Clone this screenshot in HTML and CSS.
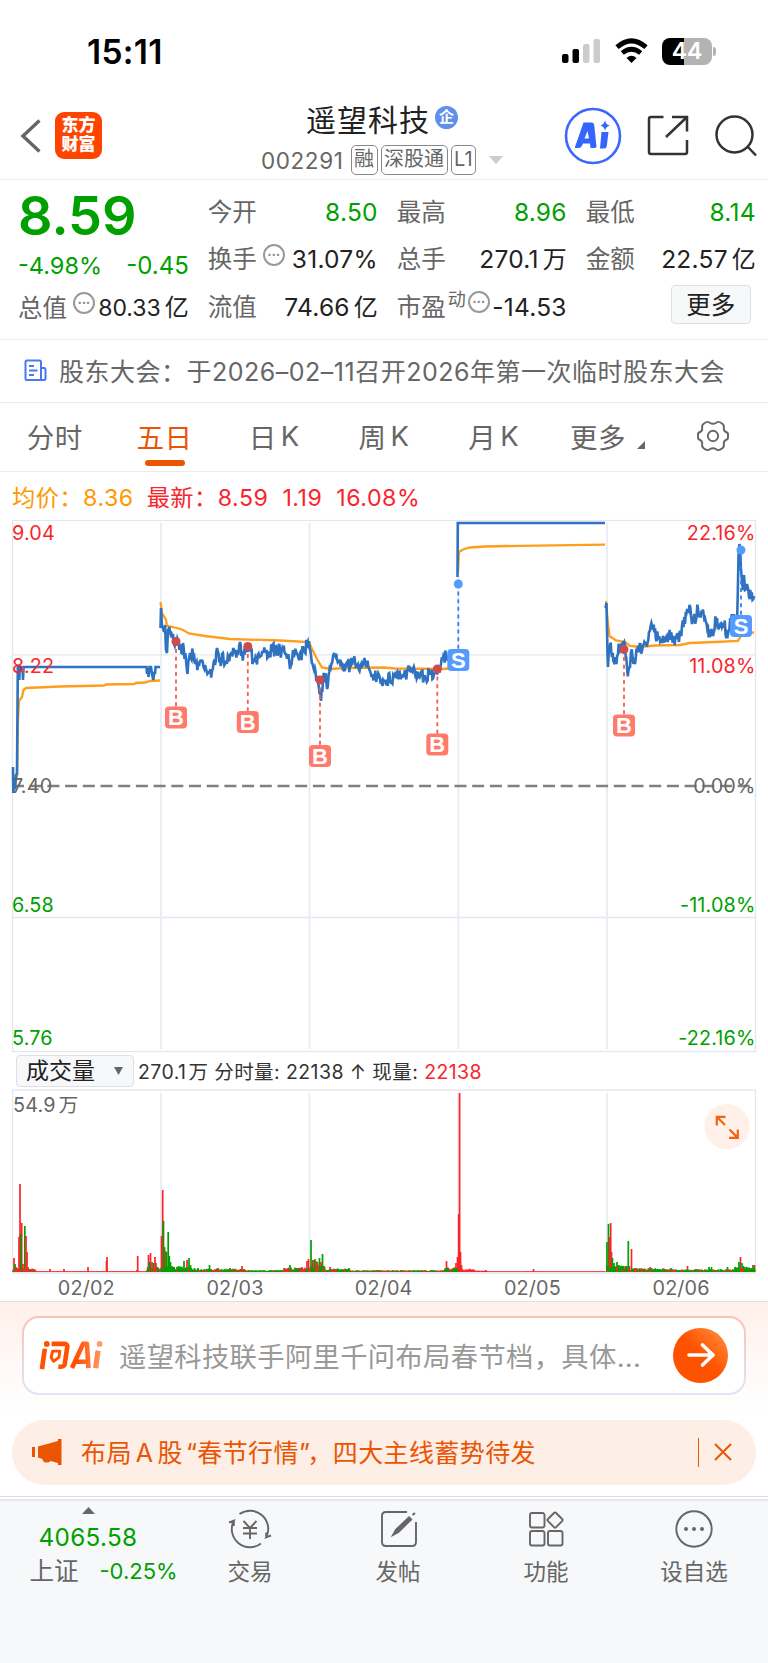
FILE: index.html
```
<!DOCTYPE html>
<html lang="zh-CN">
<head>
    <meta charset="utf-8">
    <title>遥望科技 002291</title>
    <link rel="stylesheet" href="styles.css">
</head>
<body>
    <div class="status-bar">
        <span class="time">15:11</span>
        <div class="status-icons">
            <svg width="39" height="25" viewBox="0 0 39 25">
                <rect x="0" y="15" width="6.5" height="9" rx="2" fill="#000"/>
                <rect x="10.5" y="10" width="6.5" height="14" rx="2" fill="#000"/>
                <rect x="21" y="5" width="6.5" height="19" rx="2" fill="#ccc"/>
                <rect x="31.5" y="0" width="6.5" height="24" rx="2" fill="#ccc"/>
            </svg>
            <svg width="33" height="25" viewBox="0 0 33 25">
                <path d="M2 8.2 Q16.5 -4.6 31 8.2" fill="none" stroke="#000" stroke-width="5"/>
                <path d="M7.3 14 Q16.5 6.4 25.7 14" fill="none" stroke="#000" stroke-width="4.8"/>
                <path d="M11.5 19 Q16.5 14.6 21.5 19 L16.5 24 Z" fill="#000"/>
            </svg>
            <div class="battery"><span>44</span></div>
        </div>
    </div>

    <div class="header">
        <div class="header-left">
            <svg width="20" height="34" viewBox="0 0 20 34"><path d="M18.5 1.5 L2 17 L18.5 32.5" fill="none" stroke="#666" stroke-width="3.4"/></svg>
            <div class="logo">东方<br>财富</div>
        </div>
        <div class="header-title">
            <div class="name">遥望科技<span class="corp">企</span></div>
            <div class="code">
                <span>002291</span><i class="tag">融</i><i class="tag">深股通</i><i class="tag">L1</i>
                <svg class="drop" width="14" height="8" viewBox="0 0 14 8"><path d="M0 0H14L7 8Z" fill="#ccc"/></svg>
            </div>
        </div>
        <div class="header-right">
            <svg width="58" height="58" viewBox="0 0 58 58">
                <circle cx="29" cy="29" r="27" fill="none" stroke="#3b66ff" stroke-width="2.6"/>
                <path fill="#3466ff" fill-rule="evenodd" d="M19.5 15.5H28Q30 15.5 30.2 18L32.5 39.5Q32.3 41 30.5 41H26.5L26 36.5H19L17.5 39.5Q16.5 41 14 41H11Q10.5 40.5 11.5 38.5ZM23.5 24L20.5 31.5H25Z"/>
                <path fill="#3466ff" d="M37.5 25H44.5L42.8 39Q42.5 41.5 40 41.5H36Z M41 13.5Q42 18 46 18.5Q42 19.5 41 23.5Q40 19.5 36.5 18.5Q40 17.5 41 13.5Z"/>
            </svg>
            <svg class="share" width="42" height="42" viewBox="0 0 42 42" fill="none" stroke="#333" stroke-width="2.5">
                <path d="M16.5 2H4Q2 2 2 4V37Q2 39 4 39H38Q40 39 40 37V25"/>
                <path d="M25 2H40V16.5M40 2L19 22"/>
            </svg>
            <svg width="42" height="42" viewBox="0 0 42 42" fill="none" stroke="#333" stroke-width="2.5">
                <circle cx="19.5" cy="19.5" r="18"/><path d="M32 31L41 40.5"/>
            </svg>
        </div>
    </div>

    <div class="quote">
        <div class="price-col">
            <div class="price">8.59</div>
            <div class="change"><span>-4.98%</span><span>-0.45</span></div>
            <div class="cell total"><label>总值</label><i class="dots">•••</i><b>80.33<em>亿</em></b></div>
        </div>
        <div class="cells">
            <div class="cell"><label>今开</label><b class="green">8.50</b></div>
            <div class="cell"><label>最高</label><b class="green">8.96</b></div>
            <div class="cell"><label>最低</label><b class="green">8.14</b></div>
            <div class="cell"><label>换手</label><i class="dots gap">•••</i><b>31.07%</b></div>
            <div class="cell"><label>总手</label><b>270.1<em>万</em></b></div>
            <div class="cell"><label>金额</label><b>22.57<em>亿</em></b></div>
            <div class="cell"><label>流值</label><b>74.66<em>亿</em></b></div>
            <div class="cell"><label>市盈</label><sup>动</sup><i class="dots pe">•••</i><b>-14.53</b></div>
            <div class="cell"><button class="more">更多</button></div>
        </div>
    </div>

    <div class="notice">
        <svg width="23" height="23" viewBox="0 0 23 23" fill="none" stroke="#4a78f5" stroke-width="2">
            <path d="M17 21H3Q1.5 21 1.5 19.5V3Q1.5 1.5 3 1.5H15.5Q17 1.5 17 3ZM17 9H20Q21.5 9 21.5 10.5V19.5Q21.5 21 20 21H17"/>
            <path d="M5 7H10M5 11.5H13.5M5 16H10"/>
        </svg>
        <span>股东大会：<u>于2026–02–11召开2026年第一次临时股东大会</u></span>
    </div>

    <div class="tabs">
        <div class="tab">分时</div>
        <div class="tab active">五日</div>
        <div class="tab">日<s>K</s></div>
        <div class="tab">周<s>K</s></div>
        <div class="tab">月<s>K</s></div>
        <div class="tab tab-more">更多<svg width="8" height="8" viewBox="0 0 8 8"><path d="M8 0V8H0Z" fill="#666"/></svg></div>
        <div class="tab">
            <svg width="34" height="32" viewBox="-17 -16 34 32" fill="none" stroke="#666" stroke-width="1.9">
                <circle r="5.2"/>
                <path d="M-9 -12.5Q-5 -15.5 -3 -13Q0 -11.5 3 -13Q5 -15.5 9 -12.5Q11.5 -11 10.8 -8Q10.5 -5 13 -4Q15.5 -3.5 15 0Q15.5 3.5 13 4Q10.5 5 10.8 8Q11.5 11 9 12.5Q5 15.5 3 13Q0 11.5 -3 13Q-5 15.5 -9 12.5Q-11.5 11 -10.8 8Q-10.5 5 -13 4Q-15.5 3.5 -15 0Q-15.5 -3.5 -13 -4Q-10.5 -5 -10.8 -8Q-11.5 -11 -9 -12.5Z"/>
            </svg>
        </div>
    </div>

    <div class="averages">
        <span class="avg">均价：<b>8.36</b></span>
        <span class="last">最新：<b>8.59</b><b>1.19</b><b>16.08%</b></span>
    </div>

    <svg class="chart" id="priceChart" width="768" height="534" viewBox="0 519 768 534"></svg>

    <div class="volume-bar">
        <button class="volume-type">成交量<svg width="9" height="8" viewBox="0 0 9 8"><path d="M0 0H9L4.5 8Z" fill="#666"/></svg></button>
        <span>270.1<em>万</em> 分时量: 22138 ↑ 现量: <strong>22138</strong></span>
    </div>

    <svg class="chart" id="volumeChart" width="768" height="213" viewBox="0 1088 768 213"></svg>

    <div class="ask">
        <div class="ask-box">
            <svg width="64" height="31" viewBox="0 0 66 32">
                <defs>
                    <linearGradient id="askFill" x1="0" y1="0" x2="66" y2="0" gradientUnits="userSpaceOnUse">
                        <stop offset="0.6" stop-color="#ff5200"/><stop offset="1" stop-color="#ff9c6c"/>
                    </linearGradient>
                </defs>
                <g fill="none" stroke="url(#askFill)" stroke-width="4.8" stroke-linejoin="round">
                    <path d="M6 9L3 30M13 4H26Q30 4 29 8L26.5 25Q26 28 20 27.5"/>
                    <path d="M14 11.5H21.5L20.5 18L15 22L12.5 18Z" stroke-width="3"/>
                    <path d="M34 29L45.5 4H49.5L51 29M38.5 22.5H51"/>
                    <path d="M61 11L58.5 29" stroke-width="5.4"/>
                </g>
                <circle cx="8" cy="4" r="3" fill="#ff5200"/>
                <circle cx="62.5" cy="4" r="3" fill="#ff9c6c"/>
            </svg>
            <span class="ask-text">遥望科技联手阿里千问布局春节档，具体...</span>
            <div class="ask-go">
                <svg width="28" height="26" viewBox="0 0 28 26" fill="none" stroke="#fff" stroke-width="3.6" stroke-linecap="round" stroke-linejoin="round"><path d="M2 13H26M15.5 3L26 13L15.5 23"/></svg>
            </div>
        </div>
    </div>

    <div class="banner">
        <svg width="30" height="26" viewBox="0 0 30 26" fill="#ea5504"><path d="M0 8H3V18H0ZM6 7.5L26 2V0H29.5V26H26V24L18.5 22Q17 24 13.5 23.5Q10.5 22.5 10.5 20L6 18.5Z"/></svg>
        <span class="banner-text">布局<s>A</s>股<q>春节行情</q>，四大主线蓄势待发</span>
        <i class="banner-line"></i>
        <svg width="18" height="18" viewBox="0 0 18 18" stroke="#ea5504" stroke-width="1.9"><path d="M1 1L17 17M17 1L1 17"/></svg>
    </div>

    <div class="bottom-nav">
        <div class="index">
            <svg width="13" height="7" viewBox="0 0 13 7"><path d="M6.5 0L13 7H0Z" fill="#666"/></svg>
            <div class="index-value">4065.58</div>
            <div class="index-name">上证<span>-0.25%</span></div>
        </div>
        <div class="nav-item">
            <svg width="44" height="40" viewBox="-22 -20 44 40" fill="none" stroke="#666" stroke-width="1.9">
                <path d="M-10.5 -14.9A18.2 18.2 0 0 1 16.2 8.3L21 6.5M16.2 8.3V3.5"/>
                <path d="M11 14.5A18.2 18.2 0 0 1 -16.2 -8.3L-21 -6.5M-16.2 -8.3V-3"/>
                <path d="M-6.5 -8L0 -1L6.5 -8M0 -1V10M-7 -1H7M-7 4.5H7"/>
            </svg>
            <span>交易</span>
        </div>
        <div class="nav-item">
            <svg width="40" height="40" viewBox="-21 -20 40 40" fill="none" stroke="#666" stroke-width="1.9">
                <path d="M8 -17H-13Q-17 -17 -17 -13V13Q-17 17 -13 17H13Q17 17 17 13V-7"/>
                <path d="M-5.5 5.5L-3 1L10 -11.5L12 -9.5L-1 3ZM13.5 -14L16 -16" fill="#666" stroke-width="2.2"/>
            </svg>
            <span>发帖</span>
        </div>
        <div class="nav-item">
            <svg width="40" height="40" viewBox="-20 -20 40 40" fill="none" stroke="#666" stroke-width="1.9">
                <rect x="-16" y="-16" width="14.5" height="14.5" rx="2"/>
                <rect x="-16" y="2" width="14.5" height="14.5" rx="2"/>
                <rect x="2" y="2" width="14.5" height="14.5" rx="2"/>
                <rect x="3.3" y="-14.7" width="11.5" height="11.5" rx="1.5" transform="rotate(45 9.05 -8.95)"/>
            </svg>
            <span>功能</span>
        </div>
        <div class="nav-item">
            <svg width="40" height="40" viewBox="-20 -20 40 40">
                <circle r="17.7" fill="none" stroke="#666" stroke-width="1.9"/>
                <circle cx="-8" r="2" fill="#666"/><circle r="2" fill="#666"/><circle cx="8" r="2" fill="#666"/>
            </svg>
            <span>设自选</span>
        </div>
    </div>

    <script src="chart.js"></script>
</body>
</html>
```
FILE: styles.css
```
* {
    box-sizing: border-box;
}
body {
    margin: 0;
    width: 768px;
    height: 1663px;
    overflow: hidden;
    background: #fff;
    color: #333;
    font-family: Inter, "Noto Sans CJK SC", sans-serif;
    display: flex;
    flex-direction: column;
}
svg {
    display: block;
    flex: none;
    overflow: visible;
}
i, em, b, label, u, s {
    font-style: normal;
    font-weight: 400;
    text-decoration: none;
}
button {
    font-family: inherit;
    padding: 0;
    color: #222;
    background: #f7f8fa;
    border: 1px solid #dcdfe5;
    border-radius: 4px;
}

/* 状态栏 */
.status-bar {
    height: 94px;
    padding: 8px 52px 0 87px;
    display: flex;
    align-items: center;
    justify-content: space-between;
    flex: none;
}
.time {
    font-size: 33.5px;
    font-weight: 600;
    color: #000;
    letter-spacing: 0.3px;
    padding-top: 1px;
}
.status-icons {
    display: flex;
    align-items: center;
    gap: 14px;
}
.battery {
    position: relative;
    width: 50px;
    height: 27px;
    border-radius: 8px;
    margin-right: 4px;
    background: linear-gradient(90deg, #000 44%, #b3b3b3 44%);
    color: #fff;
    font-size: 23px;
    font-weight: 600;
    line-height: 27px;
    text-align: center;
}
.battery::after {
    content: "";
    position: absolute;
    right: -4px;
    top: 9px;
    width: 3px;
    height: 9px;
    border-radius: 0 4px 4px 0;
    background: #b3b3b3;
}

/* 顶部导航 */
.header {
    height: 86px;
    flex: none;
    display: flex;
    padding: 0 12px 2px 21px;
    border-bottom: 1px solid #ebebeb;
}
.header-left {
    width: 240px;
    display: flex;
    align-items: center;
    gap: 14px;
}
.logo {
    width: 47px;
    height: 47px;
    border-radius: 9px;
    background: #ff4400;
    color: #fff;
    font-size: 17px;
    font-weight: 900;
    line-height: 19px;
    padding-top: 4px;
    text-align: center;
}
.header-title {
    width: 242px;
    display: flex;
    flex-direction: column;
    align-items: center;
}
.name {
    display: flex;
    align-items: center;
    height: 50px;
    padding-bottom: 1px;
    font-size: 30px;
    letter-spacing: 1px;
    color: #222;
}
.corp {
    width: 23px;
    height: 23px;
    border-radius: 50%;
    margin-left: 5px;
    background: #6090ea;
    color: #fff;
    font-size: 15px;
    font-weight: 700;
    line-height: 22px;
    text-align: center;
    letter-spacing: 0;
}
.code {
    display: flex;
    align-items: center;
    height: 34px;
    margin-top: 1px;
    color: #666;
    font-size: 22.5px;
    white-space: nowrap;
}
.code span {
    margin-right: 7px;
    letter-spacing: 0.6px;
}
.tag {
    height: 30px;
    line-height: 27px;
    font-size: 20px;
    padding: 0 2.5px;
    margin-right: 3px;
    border: 1px solid #888;
    border-radius: 5px;
}
.drop {
    margin-left: 10px;
}
.header-right {
    width: 206px;
    margin-left: auto;
    padding-left: 14px;
    display: flex;
    align-items: center;
}
.share {
    margin: 0 26px 0 25px;
}

/* 行情 */
.quote {
    height: 160px;
    flex: none;
    display: flex;
    gap: 19px;
    padding: 9px 12px 0 19px;
    border-bottom: 1px solid #ebebeb;
}
.price-col {
    width: 170px;
    color: #00a000;
}
.price {
    height: 54px;
    margin-left: -1px;
    font-size: 54px;
    line-height: 53px;
    font-weight: 600;
}
.change {
    display: flex;
    justify-content: space-between;
    align-items: center;
    height: 45px;
    margin-left: -1px;
    font-size: 24px;
}
.change span:first-child {
    font-size: 23.5px;
}
.price-col .total {
    height: 40px;
    margin-left: -1px;
    line-height: 40px;
}
.cells {
    width: 549px;
    display: grid;
    grid-template-columns: 170px 170px 170px;
    grid-auto-rows: 47.3px;
    column-gap: 19px;
}
.cell {
    display: flex;
    align-items: center;
    height: 47px;
    font-size: 25px;
    line-height: 47px;
    color: #222;
    white-space: nowrap;
}
.cell label {
    font-size: 24.5px;
    color: #666;
}
.cell b {
    margin-left: auto;
    font-size: 24.5px;
    letter-spacing: 0.25px;
}
.cell em {
    font-size: 24px;
    margin-left: 4px;
    letter-spacing: 0;
}
.cell .green {
    color: #00a000;
}
.cell.total b {
    font-size: 23px;
    letter-spacing: 0;
}
.dots {
    width: 22px;
    height: 22px;
    border: 2px solid #999;
    border-radius: 50%;
    color: #888;
    font-size: 7px;
    line-height: 18px;
    text-align: center;
    margin: 0 0 10px 6px;
    flex: none;
    letter-spacing: 0.3px;
}
.cell sup {
    font-size: 18px;
    line-height: 18px;
    color: #666;
    margin: 0 0 14px 2px;
}
.dots.pe {
    margin-left: 2px;
}
.more {
    width: 80px;
    height: 39px;
    margin: -5px 5px 0 auto;
    font-size: 24.5px;
    line-height: 34px;
}

/* 公告 */
.notice {
    height: 63px;
    flex: none;
    display: flex;
    align-items: center;
    gap: 12px;
    padding: 0 0 2px 24px;
    border-bottom: 1px solid #ebebeb;
    color: #666;
    font-size: 25px;
    letter-spacing: 0.5px;
    white-space: nowrap;
}

/* 周期切换 */
.tabs {
    height: 69px;
    flex: none;
    display: grid;
    grid-template-columns: repeat(7, 1fr);
    border-bottom: 1px solid #ebebeb;
}
.tab {
    display: flex;
    align-items: center;
    justify-content: center;
    position: relative;
    font-size: 27.5px;
    letter-spacing: 0.5px;
    color: #666;
    padding-bottom: 3px;
}
.tab s {
    margin-left: 4px;
}
.active {
    color: #ea5504;
}
.active::after {
    content: "";
    position: absolute;
    left: 35px;
    bottom: 5px;
    width: 40px;
    height: 6px;
    border-radius: 3px;
    background: #ea5504;
}
.tab-more {
    padding-left: 8px;
}
.tab-more svg {
    margin: 18px 0 0 11px;
}

.averages {
    height: 47px;
    flex: none;
    display: flex;
    align-items: center;
    gap: 13px;
    padding-left: 12px;
    font-size: 23.2px;
    letter-spacing: 0.5px;
    color: #f9252b;
    white-space: nowrap;
}
.averages b + b {
    margin-left: 14px;
}
.averages .avg {
    color: #ff9800;
}

/* 图表 */
.chart {
    font-size: 19.8px;
    letter-spacing: 0.15px;
}
.grid {
    stroke: #e4e7ee;
    stroke-width: 1.3;
    fill: none;
}
.day-line {
    stroke: #e8ebf2;
    stroke-width: 1.8;
}
.zero {
    stroke: #808080;
    stroke-width: 2.4;
    stroke-dasharray: 12 5.7;
}
.price-line {
    fill: none;
    stroke: #2e72c0;
    stroke-width: 2.6;
}
.avg-line {
    fill: none;
    stroke: #ff9d1c;
    stroke-width: 2.3;
}
.up { fill: #f9252b; }
.down { fill: #00a000; }
.flat { fill: #666; }
.mark-text {
    fill: #fff;
    font-family: "Liberation Sans", Arial, sans-serif;
    font-size: 22px;
    font-weight: 700;
    letter-spacing: 0;
    text-anchor: middle;
}
.volume-bar {
    height: 35px;
    flex: none;
    display: flex;
    align-items: center;
    gap: 4px;
    padding-left: 16px;
    font-size: 19.5px;
    letter-spacing: 0.42px;
    white-space: nowrap;
}
.volume-bar strong {
    font-weight: 400;
    color: #f9252b;
}
.volume-bar em {
    margin-left: 2px;
}
.volume-type {
    width: 118px;
    height: 32px;
    font-size: 23px;
    line-height: 28px;
    display: flex;
    align-items: center;
    justify-content: center;
    gap: 19px;
    padding-right: 1px;
}

/* 问AI */
.ask {
    height: 112px;
    flex: none;
    padding: 14px 22px 0;
    border-top: 1px solid #dde0e6;
    background: linear-gradient(#fff1ec, #fff);
}
.ask-box {
    height: 79px;
    display: flex;
    align-items: center;
    padding: 0 16px 1px 15px;
    border: 2px solid transparent;
    border-radius: 17px;
    background: linear-gradient(#fff, #fff) padding-box, linear-gradient(#ffc0b3, #dde6f6) border-box;
}
.ask-text {
    margin-left: 16px;
    padding-bottom: 1px;
    font-size: 27.3px;
    letter-spacing: 0.35px;
    color: #999;
    white-space: nowrap;
}
.ask-go {
    width: 55px;
    height: 55px;
    border-radius: 50%;
    margin-left: auto;
    background: linear-gradient(45deg, #ff5200 50%, #ff9440);
    display: flex;
    align-items: center;
    justify-content: center;
}

.banner {
    height: 65px;
    flex: none;
    margin: 7px 12px 11px;
    padding: 0 24px 1px 20px;
    border-radius: 33px;
    background: #fdeee6;
    color: #ea5504;
    font-size: 25px;
    letter-spacing: 0.4px;
    display: flex;
    align-items: center;
    white-space: nowrap;
}
.banner-text {
    margin-left: 19px;
    padding-bottom: 3px;
}
.banner-text s {
    margin: 0 4px;
}
.banner-text q {
    quotes: "“" "”";
    margin: 0 -3px 0 3px;
}
.banner-line {
    width: 1.5px;
    height: 29px;
    margin: 0 15px 0 auto;
    background: #ea5504;
}

/* 底部 */
.bottom-nav {
    flex: 1;
    display: flex;
    border-top: 1px solid #d9dce2;
    box-shadow: inset 0 2px #fff, inset 0 4px #e4e7ee;
    background: #f7f8fa;
    color: #666;
    font-size: 22.5px;
}
.index {
    width: 176px;
    display: flex;
    flex-direction: column;
    align-items: center;
    padding-top: 10px;
}
.index-value {
    height: 44px;
    line-height: 47px;
    font-size: 24.3px;
    letter-spacing: 0.3px;
    color: #00a000;
}
.index-name {
    height: 30px;
    line-height: 27px;
    font-size: 24.5px;
    display: flex;
    gap: 21px;
    width: 148px;
    margin-left: 31px;
    white-space: nowrap;
}
.index-name span {
    font-size: 22px;
    color: #00a000;
}
.nav-item {
    width: 148px;
    display: flex;
    flex-direction: column;
    align-items: center;
    padding-top: 12px;
    gap: 6px;
    line-height: 34px;
}
```
FILE: chart.js
```
var BLUE = '#559bff';
var RED = '#ff7a6b';

// 伪随机，保证每次刷新的走势一致
var seed = 7;
function rnd() {
    seed = (seed * 16807) % 2147483647;
    return seed / 2147483647;
}

function toPath(points) {
    return 'M' + points.map(p => p[0].toFixed(1) + ' ' + p[1].toFixed(1)).join('L');
}

// 在关键点之间插入分时波动
function wave(points, amp) {
    var out = [points[0]];
    for (var i = 1; i < points.length; i++) {
        var a = points[i - 1], b = points[i];
        var n = Math.max(1, Math.round((b[0] - a[0]) / 0.75));
        for (var k = 1; k < n; k++) {
            out.push([
                a[0] + (b[0] - a[0]) * k / n,
                a[1] + (b[1] - a[1]) * k / n + (rnd() + rnd() - 1) * amp
            ]);
        }
        out.push(b);
    }
    return toPath(out);
}

function text(x, y, str, cls, anchor) {
    return '<text x="' + x + '" y="' + y + '" class="' + cls + '" text-anchor="' + (anchor || 'start') + '">' + str + '</text>';
}

function line(cls, d) {
    return '<path class="' + cls + '" d="' + d + '"/>';
}

var day1 = [[13,767],[13.3,793],[14.3,780],[15,789],[16,775],[17,774],[17.8,667],[19,667],[19.3,680],[19.8,667],[22.5,667],[23,680],[23.6,667],[146.5,667],[147,674],[148,668],[148.5,677],[149.5,667],[151,667],[152,674],[153.3,680],[154.3,672],[155,674],[155.5,667],[160,667]];
var day2 = [[160.5,628],[161,608],[162,627],[163,628],[164,632],[165,625],[166,650],[167,653],[168,630],[170,632],[173,634],[174,644],[176,641],[178,640],[180,645],[181.5,653],[183,643],[186,660],[187.5,674],[190,653],[193,655],[195,663],[199,666],[201,661],[205,665],[208,673],[212,671],[215,665],[217,648],[220,658],[225,664],[230,655],[234,652],[238,655],[240,642],[242,653],[246,648],[250,648],[254,660],[260,656],[265,651],[272,652],[280,650],[286,654],[290,669],[293,650],[300,653],[304,650],[307,643],[309,641],[311,655],[314,670],[317,676],[319,688],[321,701],[323,680],[325,675],[327,689],[330,665],[333,656],[337,659],[342,664],[350,665],[358,664],[366,666],[370,671],[374,679],[379,675],[384,681],[390,680],[394,676],[400,674],[404,677],[410,671],[416,674],[421,673],[426,679],[430,671],[434,674],[438,669],[441,664],[444,658],[446,655],[448,661],[455,663]];
var day4 = [[457.5,577],[457.8,523],[605,523]];
var day5 = [[605.5,608],[606.5,603],[607.5,655],[608,667],[610,645],[612,657],[614,662],[618,654],[620,646],[625,645],[627,667],[630,667],[631,652],[635,664],[638,646],[642,651],[646,643],[649,632],[653,630],[658,638],[663,636],[669,637],[674,636],[679,642],[682,626],[685,624],[687,610],[689.5,605],[692,624],[696,620],[698,609],[700,616],[705,618],[708,628],[710,637],[713,630],[717,618],[719,628],[724,628],[727,633],[731,622],[737,625],[738.5,556],[739.5,544],[741,570],[743,590],[744,575],[745,590],[747,584],[749,597],[751,598],[754,596]];

var avg1 = [[14,790],[17,776],[18,720],[19,701],[22,697],[23.5,690],[26,688],[60,686.5],[104,685.5],[106,684.5],[134,684],[136,683],[145,682.5],[150,681],[160,680.5]];
var avg2 = [[160.5,602],[162,613],[166,620],[167,626],[173,627],[182,629.5],[189,633.5],[205,636],[230,639],[280,640.5],[309,642],[312,649],[317,659],[322,667.5],[330,669],[345,668],[384,667.5],[395,668.5],[443,669],[455,668]];
var avg4 = [[458,572],[459,552],[463,549.5],[470,547.5],[485,546.5],[520,545.8],[605,544.6]];
var avg5 = [[606,601],[608,624],[609.5,636],[616,640.5],[625,642],[630,646],[640,647],[655,645.5],[680,645],[690,643],[715,642],[738,641],[741,636],[748,633],[754,632.5]];

function mark(type, x, dotY, boxY) {
    var color = type === 'B' ? RED : BLUE;
    var dot = type === 'B' ? '#cc4a50' : BLUE;
    return '<path d="M' + x + ' ' + dotY + 'V' + boxY + '" stroke="' + (type === 'B' ? '#f85a50' : '#2f80ff') + '" stroke-width="1.8" stroke-dasharray="4 3.6"/>' +
        '<circle cx="' + x + '" cy="' + dotY + '" r="4.5" fill="' + dot + '"/>' +
        '<rect x="' + (x - 11) + '" y="' + (boxY - 11) + '" width="22" height="22" rx="4" fill="' + color + '"/>' +
        '<text class="mark-text" x="' + x + '" y="' + (boxY + 7.7) + '">' + type + '</text>';
}

var days = [161, 309.5, 458.3, 607];
var html = '<rect class="grid" x="12.5" y="520.5" width="743" height="531"/>';
html += line('grid', 'M12 654.8H755M12 917.5H755');
days.forEach(x => html += line('day-line', 'M' + x + ' 523V1049'));
html += line('zero', 'M12 786H755');
html += line('avg-line', toPath(avg1)) + line('avg-line', toPath(avg2)) + line('avg-line', toPath(avg4)) + line('avg-line', toPath(avg5));
html += line('price-line', toPath(day1)) + line('price-line', wave(day2, 9)) + line('price-line', toPath(day4)) + line('price-line', wave(day5, 10));
html += text(12, 540, '9.04', 'up') + text(12, 673, '8.22', 'up') + text(12, 792.5, '7.40', 'flat') + text(12, 912, '6.58', 'down') + text(12, 1044.5, '5.76', 'down');
html += text(755.5, 540, '22.16%', 'up', 'end') + text(755.5, 673, '11.08%', 'up', 'end') + text(755.5, 792.5, '0.00%', 'flat', 'end') + text(755.5, 912, '-11.08%', 'down', 'end') + text(755.5, 1044.5, '-22.16%', 'down', 'end');
html += mark('B', 176, 641.5, 717.5) + mark('B', 247.8, 646.5, 722) + mark('B', 320, 680, 756) + mark('B', 437.3, 669, 744.5) + mark('B', 624, 649.5, 725.5);
html += mark('S', 458.3, 584, 660) + mark('S', 741, 550, 626);
document.getElementById('priceChart').innerHTML = html;

// 成交量：[x, 高度, 涨跌]
var bars = [[14,14,1],[15,8,0],[16,5,0],[17,4,1],[19,35,1],[20,88,1],[20.7,38,0],[21.7,49,1],[23,8,1],[24.8,46,0],[26,36,1],[27,20,1],[28,5,1],[50,3,1],[64,3,1],[88,5,1],[106.5,11,1],[107,15,1],[137,2,1],[137.7,16,1],[148.5,17,1],[149.5,10,0],[150.5,19,1],[152,10,1],[153.5,9,0],[155,15,1],[156,9,1],[157.5,5,0],
    [161.5,36,1],[162.7,82,1],[163.5,51,0],[164.5,25,0],[165.5,21,1],[166.5,20,0],[168.2,40,0],[169.3,16,0],[170.5,10,0],[172,6,0],[174,5,0],[179,6,0],[184,11,0],[187,12,1],[189,14,0],[190.5,7,0],[198,4,0],[209.5,7,0],[218,4,1],[230,4,1],[242,6,1],[284,4,1],[290,7,0],[302,5,1],[307,11,1],[308.5,13,1],
    [311,32,0],[312.5,12,1],[314,12,0],[315,13,1],[316,11,0],[317.5,10,1],[319.5,14,0],[321,10,1],[322.5,18,0],[324,6,1],[330,5,1],[349,4,0],[446.5,11,1],[456,9,1],[457.5,15,1],[458.7,58,1],[459.6,179,1],[460.5,20,1],[461.5,7,1],[486,2,1],[533.5,3,1],
    [607,30,0],[608.5,48,0],[609.5,35,1],[610.7,49,1],[611.5,20,1],[612.5,14,0],[614,9,0],[617,10,0],[619,7,0],[623,6,0],[628.3,31,0],[631.5,23,1],[635,4,0],[650,5,1],[671,4,0],[687.5,6,1],[709,5,0],[711.5,5,0],[727.5,5,0],[739,10,0],[740.5,15,1],[742,9,0],[743.5,6,0],[753,7,0],[754.5,7,1]];

function fillBars(from, to, max, redRate) {
    for (var x = from; x < to; x += 0.7) {
        bars.push([x, 0.4 + (0.3 + rnd() * 0.7) * max, rnd() < redRate ? 1 : 0]);
    }
}
fillBars(13, 36, 3, 0.8);
fillBars(36, 147, 0.3, 1);
fillBars(147, 162, 5, 0.6);
fillBars(163, 195, 5, 0.1);
fillBars(195, 245, 3, 0.4);
fillBars(245, 284, 1.5, 0.2);
fillBars(284, 309, 4, 0.6);
fillBars(310, 325, 7, 0.4);
fillBars(325, 350, 3, 0.4);
fillBars(350, 445, 1.5, 0.4);
fillBars(445, 458, 4.5, 0.4);
fillBars(459, 475, 3, 1);
fillBars(475, 487, 1, 1);
fillBars(487, 606, 0.2, 1);
fillBars(607, 630, 6, 0.2);
fillBars(630, 665, 3.5, 0.3);
fillBars(665, 735, 2.5, 0.3);
fillBars(735, 755, 5, 0.2);

var vol = '<path class="day-line" d="M12 1090.2H756"/><path class="grid" d="M12.5 1090V1273M755.5 1090V1273"/>';
days.forEach(x => vol += line('day-line', 'M' + x + ' 1093V1272'));
vol += '<path class="day-line" d="M12 1273H756"/>';
bars.sort((a, b) => b[1] - a[1]).forEach(b => {
    vol += '<rect class="' + (b[2] ? 'up' : 'down') + '" x="' + (b[0] - 0.85).toFixed(2) + '" y="' + (1272 - b[1]).toFixed(1) + '" width="1.7" height="' + b[1].toFixed(1) + '"/>';
});
vol += text(13, 1112, '54.9<tspan dx="3">万</tspan>', 'flat');
['02/02', '02/03', '02/04', '02/05', '02/06'].forEach((d, i) => vol += text(86.3 + i * 148.7, 1295, d, 'flat', 'middle'));
// 全屏按钮
vol += '<circle cx="727" cy="1126.8" r="22.7" fill="#fff0e9"/>' +
    '<path d="M716.8 1125.5V1116.8H725.5M717 1117L725 1125M737.8 1129.5V1137.8H729M737.6 1137.6L729.5 1129.5" fill="none" stroke="#f0640f" stroke-width="2.2"/>';
document.getElementById('volumeChart').innerHTML = vol;
```
